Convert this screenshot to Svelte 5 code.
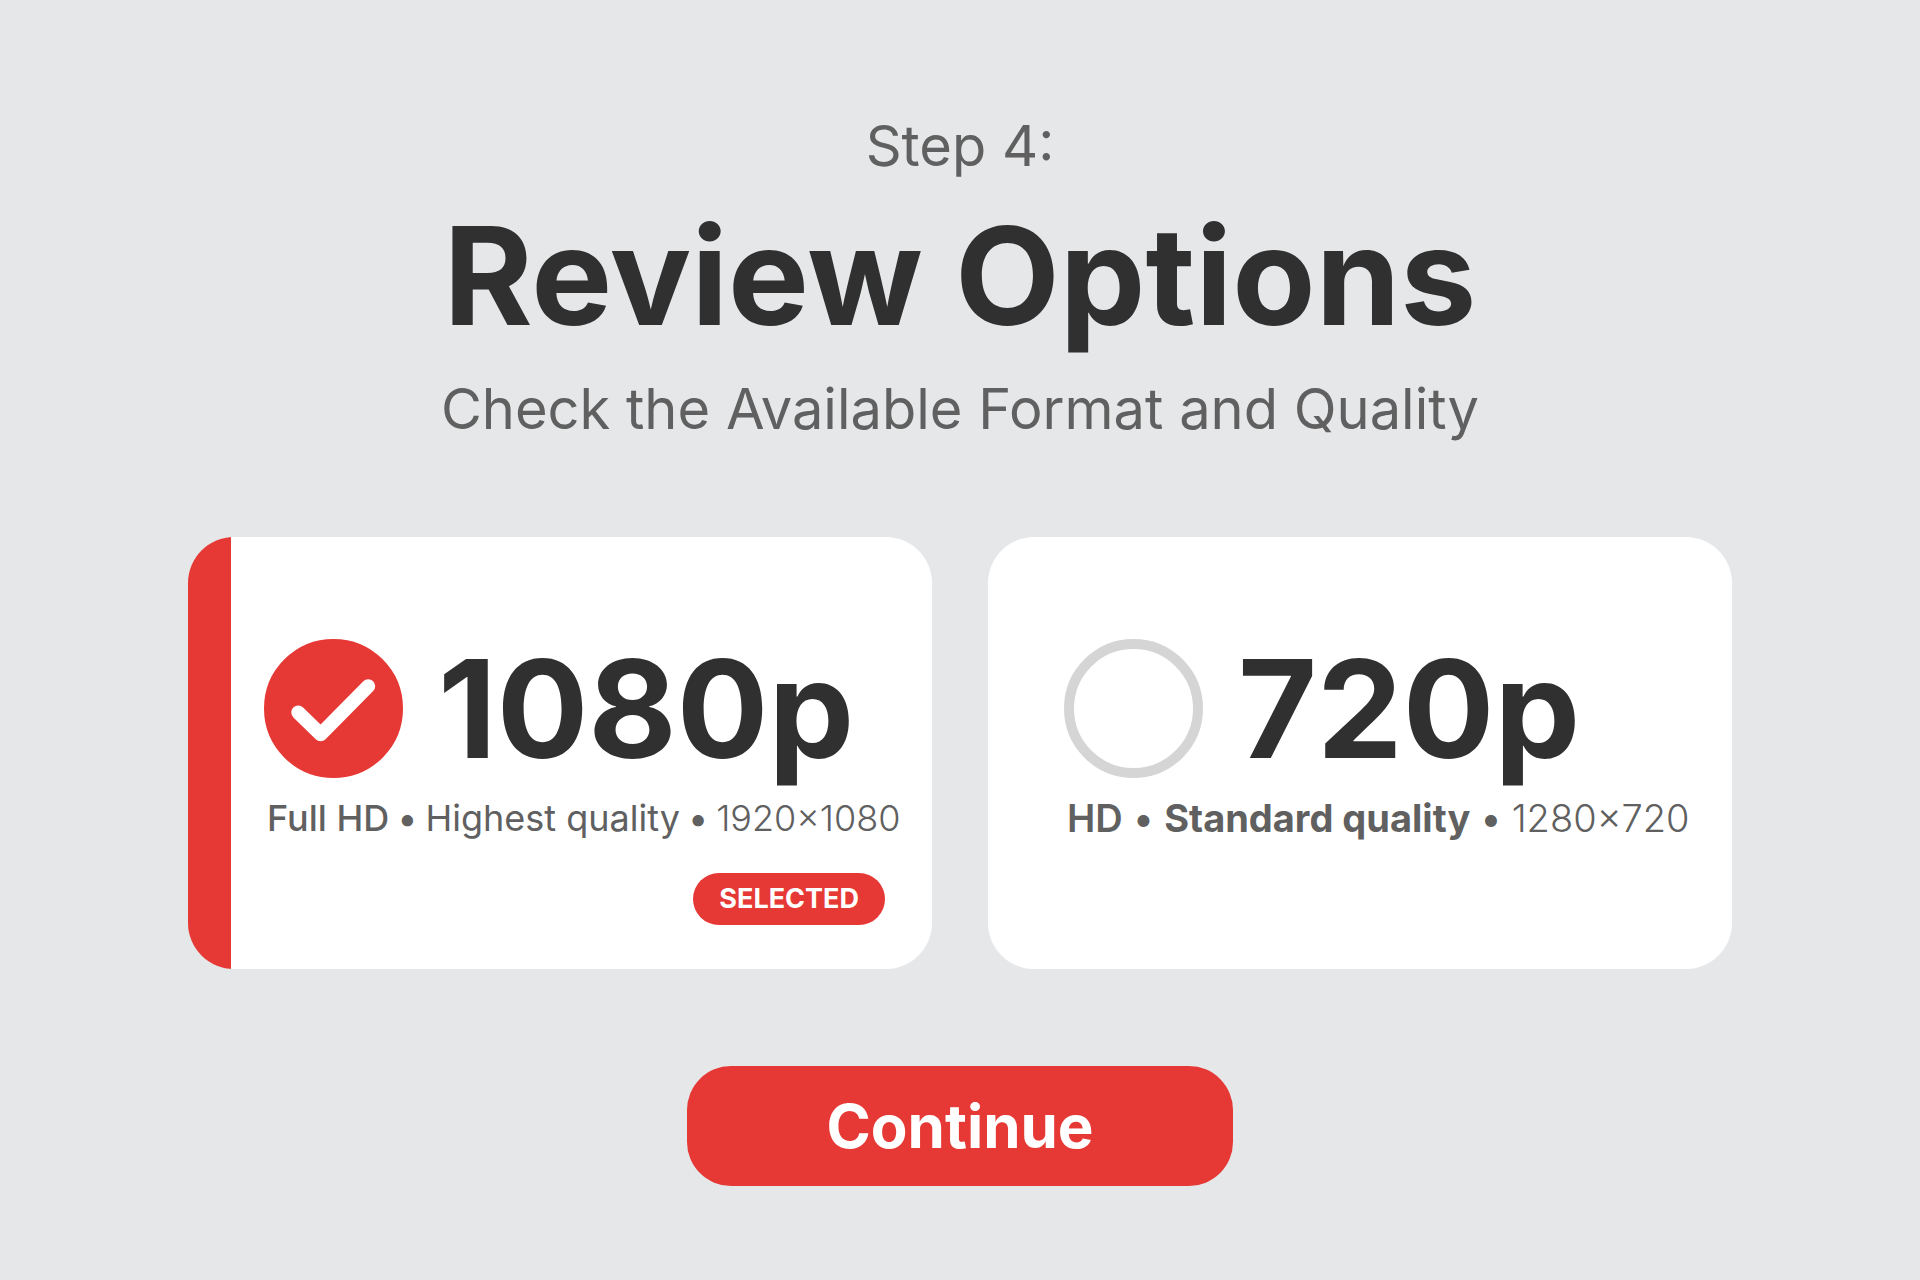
<script>
  const options = [
    {
      value: '1080p',
      size: 'compact',
      parts: [
        { text: 'Full HD', weight: 'medium' },
        { text: 'Highest quality', weight: 'normal' },
        { text: '1920×1080', weight: 'light' }
      ]
    },
    {
      value: '720p',
      size: 'regular',
      parts: [
        { text: 'HD', weight: 'strong' },
        { text: 'Standard quality', weight: 'bold' },
        { text: '1280×720', weight: 'light' }
      ]
    }
  ];

  let selected = $state('1080p');
</script>

<main class="page">
  <header class="heading">
    <p class="step">Step 4:</p>
    <h1>Review Options</h1>
    <p class="subtitle">Check the Available Format and Quality</p>
  </header>

  <form class="form" onsubmit={(e) => e.preventDefault()}>
    <div class="options" role="radiogroup" aria-label="Format and quality">
      {#each options as option (option.value)}
        <label class="card" class:selected={selected === option.value}>
          <span class="choice">
            <span class="radio">
              <input type="radio" name="quality" value={option.value} bind:group={selected} />
              <svg class="check" viewBox="0 0 140 140" aria-hidden="true">
                <path d="M34.500 74 L57 96 L105 47.500" />
              </svg>
            </span>
            <span class="resolution">{option.value}</span>
          </span>
          <span class="details {option.size}">
            {#each option.parts as part, i}
              {#if i > 0}<span class="dot">•</span>{/if}
              <span class={part.weight}>{part.text}</span>
            {/each}
          </span>
          {#if selected === option.value}
            <span class="badge">SELECTED</span>
          {/if}
        </label>
      {/each}
    </div>

    <button class="continue" type="submit">Continue</button>
  </form>
</main>

<style>
  :global(body) {
    background: #e5e7e9;
  }

  .page {
    box-sizing: border-box;
    min-height: 100vh;
    padding: 113px 188px 80px;
    background: #e5e7e9;
    color: #303030;
    font-family: Inter, 'Liberation Sans', sans-serif;
  }

  .heading {
    display: flex;
    flex-direction: column;
    align-items: center;
    gap: 17px;
    text-align: center;
  }

  .step,
  .subtitle {
    margin: 0;
    color: #606060;
    font-size: 56px;
    line-height: 66px;
  }

  .subtitle {
    line-height: 72px;
  }

  h1 {
    margin: 0;
    font-size: 136px;
    font-weight: 700;
    line-height: 160px;
  }

  .form {
    display: flex;
    flex-direction: column;
    align-items: center;
    gap: 97px;
    margin-top: 92px;
  }

  .options {
    display: grid;
    grid-template-columns: repeat(2, minmax(0, 1fr));
    gap: 56px;
    width: 100%;
  }

  .card {
    display: flex;
    flex-direction: column;
    box-sizing: border-box;
    padding: 102px 36px 44px 76px;
    border-radius: 46px;
    background: #fff;
    cursor: pointer;
  }

  .card.selected {
    background: linear-gradient(to right, #e63935 43px, #fff 43px);
  }

  .choice {
    display: flex;
    align-items: center;
    gap: 35px;
  }

  .radio {
    display: grid;
    flex: none;
    width: 139px;
    height: 139px;
  }

  .radio > * {
    grid-area: 1 / 1;
  }

  input {
    appearance: none;
    box-sizing: border-box;
    width: 100%;
    height: 100%;
    margin: 0;
    border: 10px solid #d6d5d6;
    border-radius: 50%;
    cursor: pointer;
  }

  input:checked {
    border-color: #e63935;
    background: #e63935;
  }

  .check {
    display: none;
    pointer-events: none;
  }

  input:checked + .check {
    display: block;
  }

  .check path {
    fill: none;
    stroke: #fff;
    stroke-width: 14;
    stroke-linecap: round;
    stroke-linejoin: round;
  }

  .resolution {
    font-size: 136px;
    font-weight: 700;
    line-height: 139px;
  }

  .details {
    display: flex;
    margin: 16px 0 30px 3px;
    color: #606060;
    line-height: 49px;
    white-space: nowrap;
  }

  .compact {
    gap: 8px;
    font-size: 36px;
  }

  .regular {
    gap: 10px;
    font-size: 38px;
  }

  .light {
    font-weight: 300;
  }

  .normal {
    font-weight: 400;
  }

  .medium {
    font-weight: 500;
  }

  .strong {
    font-weight: 600;
  }

  .bold {
    font-weight: 700;
  }

  .badge {
    align-self: flex-end;
    margin-right: 11px;
    padding: 0 26px;
    border-radius: 26px;
    background: #e63935;
    color: #fff;
    font-size: 27px;
    font-weight: 700;
    line-height: 52px;
  }

  .continue {
    padding: 0 139px;
    border: 0;
    border-radius: 44px;
    background: #e63935;
    color: #fff;
    font-family: inherit;
    font-size: 60px;
    font-weight: 700;
    line-height: 120px;
    cursor: pointer;
  }
</style>
